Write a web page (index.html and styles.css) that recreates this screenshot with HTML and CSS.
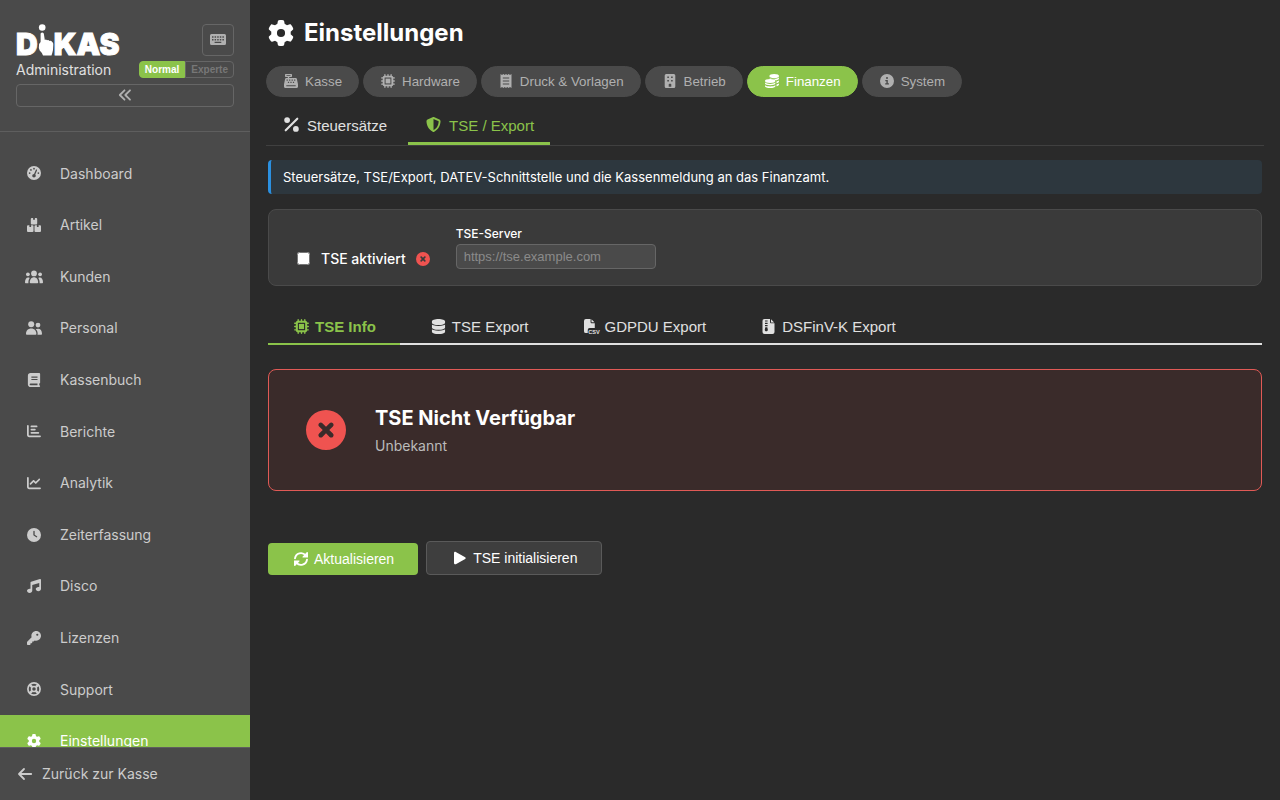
FILE: index.html
```html
<!DOCTYPE html>
<html lang="de">

<head>
    <meta charset="UTF-8">
    <meta name="viewport" content="width=device-width, initial-scale=1">
    <title>DiKAS Administration</title>
    <link rel="stylesheet" href="styles.css">
</head>

<body>
    <!-- Icons -->
    <svg class="sprite" aria-hidden="true">
        <symbol id="i-gear" viewBox="0 0 512 512"><path d="M495.9 166.6c3.2 8.7 .5 18.4-6.4 24.6l-43.3 39.4c1.1 8.3 1.7 16.8 1.7 25.4s-.6 17.1-1.7 25.4l43.3 39.4c6.9 6.2 9.6 15.9 6.4 24.6c-4.4 11.9-9.7 23.3-15.8 34.3l-4.7 8.1c-6.6 11-14 21.4-22.1 31.2c-5.9 7.2-15.7 9.6-24.5 6.8l-55.7-17.7c-13.4 10.3-28.2 18.9-44 25.4l-12.5 57.1c-2 9.1-9 16.3-18.2 17.8c-13.8 2.3-28 3.5-42.5 3.5s-28.7-1.2-42.5-3.5c-9.2-1.5-16.2-8.7-18.2-17.8l-12.5-57.1c-15.8-6.5-30.6-15.1-44-25.4L83.1 425.9c-8.8 2.8-18.6 .3-24.5-6.8c-8.1-9.8-15.5-20.2-22.1-31.2l-4.7-8.1c-6.1-11-11.4-22.4-15.8-34.3c-3.2-8.7-.5-18.4 6.4-24.6l43.3-39.4C64.6 273.1 64 264.6 64 256s.6-17.1 1.7-25.4L22.4 191.2c-6.9-6.2-9.6-15.9-6.4-24.6c4.4-11.9 9.7-23.3 15.8-34.3l4.7-8.1c6.6-11 14-21.4 22.1-31.2c5.9-7.2 15.7-9.6 24.5-6.8l55.7 17.7c13.4-10.3 28.2-18.9 44-25.4l12.5-57.1c2-9.1 9-16.3 18.2-17.8C227.3 1.2 241.5 0 256 0s28.7 1.2 42.5 3.5c9.2 1.5 16.2 8.7 18.2 17.8l12.5 57.1c15.8 6.5 30.6 15.1 44 25.4l55.7-17.7c8.8-2.8 18.6-.3 24.5 6.8c8.1 9.8 15.5 20.2 22.1 31.2l4.7 8.1c6.1 11 11.4 22.4 15.8 34.3zM256 336a80 80 0 1 0 0-160 80 80 0 1 0 0 160z"/></symbol>
        <symbol id="i-gauge" viewBox="0 0 512 512"><path d="M0 256a256 256 0 1 1 512 0A256 256 0 1 1 0 256zM288 96a32 32 0 1 0 -64 0 32 32 0 1 0 64 0zM256 416c35.3 0 64-28.7 64-64c0-17.4-6.9-33.1-18.1-44.6L366 161.7c5.3-12.1-.2-26.3-12.3-31.6s-26.3 .2-31.6 12.3L257.9 288c-.6 0-1.3 0-1.9 0c-35.3 0-64 28.7-64 64s28.7 64 64 64zM176 144a32 32 0 1 0 -64 0 32 32 0 1 0 64 0zM96 288a32 32 0 1 0 0-64 32 32 0 1 0 0 64zm352-32a32 32 0 1 0 -64 0 32 32 0 1 0 64 0z"/></symbol>
        <symbol id="i-boxes" viewBox="0 0 14 14"><path d="M4.800 0h1.300v1.800h1.800V0H9.200a1 1 0 0 1 1 1v4.500a1 1 0 0 1-1 1H4.800a1 1 0 0 1-1-1V1a1 1 0 0 1 1-1zM1 7.300h1.400v1.800h1.700V7.300h1.400a1 1 0 0 1 1 1V13a1 1 0 0 1-1 1H1a1 1 0 0 1-1-1V8.300a1 1 0 0 1 1-1zM8.500 7.300h1.400v1.800h1.700V7.300H13a1 1 0 0 1 1 1V13a1 1 0 0 1-1 1H8.500a1 1 0 0 1-1-1V8.300a1 1 0 0 1 1-1z"/></symbol>
        <symbol id="i-users" viewBox="0 0 18 14"><circle cx="9" cy="3.400" r="2.900"/><circle cx="2.900" cy="4.300" r="1.900"/><circle cx="15.100" cy="4.300" r="1.900"/><path d="M4.800 12.500C4.800 9.400 6.500 7.200 9 7.200s4.200 2.200 4.200 5.300c0 .5-.3.800-.8.800H5.600c-.5 0-.8-.3-.8-.8zM0 12.300c0-2.700 1.100-4.800 3.200-4.800.6 0 1.100.1 1.500.4-.9 1.200-1.400 3.200-1.300 5.400H1c-.6 0-1-.3-1-1zM18 12.300c0-2.700-1.100-4.800-3.200-4.800-.6 0-1.100.1-1.500.4.900 1.200 1.400 3.200 1.300 5.400H17c.6 0 1-.3 1-1z"/></symbol>
        <symbol id="i-team" viewBox="0 0 16 14"><circle cx="5.200" cy="3.300" r="3"/><circle cx="12" cy="4.100" r="2.400"/><path d="M0 13c0-3.200 2-5.400 5.200-5.400s5.200 2.200 5.200 5.400c0 .5-.3.800-.8.800H.8c-.5 0-.8-.3-.8-.8zM9.700 8.300c.6-.4 1.400-.6 2.300-.6 2.500 0 4 1.900 4 5.100 0 .6-.4 1-1 1h-3.500c.5-2.200-.2-4.200-1.800-5.500z"/></symbol>
        <symbol id="i-book" viewBox="0 0 448 512"><path d="M96 0C43 0 0 43 0 96V416c0 53 43 96 96 96H384h32c17.700 0 32-14.300 32-32s-14.300-32-32-32V384c17.700 0 32-14.300 32-32V32c0-17.700-14.300-32-32-32H384 96zm0 384H352v64H96c-17.700 0-32-14.300-32-32s14.300-32 32-32zm32-252h224v44H128zm0 84h224v44H128z"/></symbol>
        <symbol id="i-bars" viewBox="0 0 512 512"><path d="M32 32c17.700 0 32 14.300 32 32V400c0 8.800 7.200 16 16 16H480c17.700 0 32 14.300 32 32s-14.300 32-32 32H80c-44.200 0-80-35.800-80-80V64C0 46.300 14.300 32 32 32zM160 58H352a31 31 0 0 1 0 62H160a31 31 0 0 1 0-62zm0 116H288a31 31 0 0 1 0 62H160a31 31 0 0 1 0-62zm0 116H416a31 31 0 0 1 0 62H160a31 31 0 0 1 0-62z"/></symbol>
        <symbol id="i-chart" viewBox="0 0 512 512"><path d="M64 64c0-17.700-14.300-32-32-32S0 46.300 0 64V400c0 44.200 35.800 80 80 80H480c17.700 0 32-14.300 32-32s-14.300-32-32-32H80c-8.800 0-16-7.200-16-16V64zm406.600 86.600c12.500-12.500 12.500-32.800 0-45.300s-32.800-12.500-45.300 0L320 210.700l-57.400-57.400c-12.500-12.500-32.800-12.500-45.300 0l-112 112c-12.500 12.500-12.500 32.800 0 45.300s32.800 12.500 45.300 0L240 221.300l57.400 57.400c12.500 12.500 32.800 12.500 45.300 0l128-128z"/></symbol>
        <symbol id="i-clock" viewBox="0 0 512 512"><path d="M256 0a256 256 0 1 1 0 512A256 256 0 1 1 256 0zM232 120V256c0 8 4 15.500 10.700 20l96 64c11 7.400 25.900 4.400 33.300-6.700s4.400-25.900-6.700-33.300L280 243.200V120c0-13.300-10.700-24-24-24s-24 10.700-24 24z"/></symbol>
        <symbol id="i-music" viewBox="0 0 512 512"><path d="M499.100 6.300c8.100 6 12.900 15.600 12.900 25.700v72V368c0 44.200-43 80-96 80s-96-35.800-96-80s43-80 96-80c11.200 0 22 1.600 32 4.600V147L192 223.800V432c0 44.200-43 80-96 80s-96-35.800-96-80s43-80 96-80c11.200 0 22 1.600 32 4.600V200 128c0-14.100 9.300-26.600 22.800-30.700l320-96c9.700-2.900 20.200-1.100 28.300 5z"/></symbol>
        <symbol id="i-key" viewBox="0 0 512 512"><path d="M336 352c97.200 0 176-78.800 176-176S433.200 0 336 0S160 78.800 160 176c0 18.700 2.900 36.800 8.300 53.700L7 391c-4.500 4.500-7 10.600-7 17v80c0 13.300 10.700 24 24 24h80c13.300 0 24-10.700 24-24V448h40c13.300 0 24-10.700 24-24V384h40c6.400 0 12.500-2.500 17-7l33.300-33.300c16.900 5.400 35 8.300 53.700 8.300zM376 96a40 40 0 1 1 0 80 40 40 0 1 1 0-80z"/></symbol>
        <symbol id="i-ring" viewBox="0 0 14 14"><g fill="none" stroke="currentColor"><circle cx="7" cy="7" r="6.100" stroke-width="1.700"/><circle cx="7" cy="7" r="2.500" stroke-width="1.500"/><path stroke-width="2.400" d="M2.800 2.800l2.400 2.400M11.200 2.800L8.800 5.200M2.800 11.200l2.400-2.400M11.200 11.200L8.800 8.800"/></g></symbol>
        <symbol id="i-left" viewBox="0 0 14 14"><path d="M6 2L1 7l5 5M1.200 7H13.200" fill="none" stroke="currentColor" stroke-width="1.800" stroke-linecap="round" stroke-linejoin="round"/></symbol>
        <symbol id="i-collapse" viewBox="0 0 14 14"><path d="M6.500 2.300L1.800 7l4.700 4.700M12 2.300L7.300 7l4.700 4.700" fill="none" stroke="currentColor" stroke-width="1.800" stroke-linecap="round" stroke-linejoin="round"/></symbol>
        <symbol id="i-keyboard" viewBox="0 0 16 12"><path fill-rule="evenodd" d="M1.500 0h13A1.500 1.500 0 0 1 16 1.500v8a1.500 1.500 0 0 1-1.500 1.500h-13A1.500 1.500 0 0 1 0 9.500v-8A1.500 1.500 0 0 1 1.500 0zM2 2.200v1.500h1.500V2.200zm2.600 0v1.500h1.500V2.200zm2.600 0v1.500h1.500V2.200zm2.600 0v1.500h1.500V2.200zm2.600 0v1.500h1.500V2.200zM2 4.900v1.500h1.500V4.900zm2.600 0v1.500h1.500V4.900zm2.600 0v1.500h1.500V4.900zm2.600 0v1.500h1.500V4.900zm2.600 0v1.500h1.500V4.900zM4.600 7.700v1.400h6.700V7.700z"/></symbol>
        <symbol id="i-register" viewBox="0 0 14 14"><path fill-rule="evenodd" d="M1.700 0h5.600a.7.700 0 0 1 .7.700v1.600a.7.700 0 0 1-.7.700H5.200v1h6.400c.7 0 1.200.4 1.300 1.100L14 10.300v2.500c0 .7-.5 1.200-1.200 1.200H1.200C.5 14 0 13.500 0 12.800v-2.500l1.100-5.200C1.200 4.400 1.700 4 2.400 4h1.400V3H1.700a.7.700 0 0 1-.7-.7V.700A.7.700 0 0 1 1.700 0zm.8 1.100v.7h4v-.7zM2.600 5.600v1.100h1.200V5.600zm2.500 0v1.100h1.200V5.600zm2.500 0v1.100h1.200V5.600zm2.500 0v1.100h1.200V5.600zM3.900 7.800v1.100h1.200V7.800zm2.500 0v1.100h1.200V7.800zm2.500 0v1.100h1.200V7.800zM2.300 11.300v1h9.400v-1z"/></symbol>
        <symbol id="i-chip" viewBox="0 0 14 14"><path fill="none" stroke="currentColor" stroke-width="1.300" stroke-linecap="round" d="M3.900.7V2.500M7 .7V2.500M10.100.7V2.500M3.900 11.500v1.800M7 11.500v1.800M10.100 11.500v1.800M.7 3.900H2.500M.7 7H2.500M.7 10.100H2.500M11.500 3.900h1.800M11.500 7h1.800M11.500 10.100h1.800"/><path fill-rule="evenodd" d="M3.500 1.700h7a1.800 1.800 0 0 1 1.800 1.800v7a1.800 1.800 0 0 1-1.800 1.800h-7a1.800 1.800 0 0 1-1.800-1.800v-7a1.800 1.800 0 0 1 1.800-1.800zM3.600 3.600v6.800h6.800V3.600z"/><path d="M4.600 4.600h4.800v4.800H4.600z"/></symbol>
        <symbol id="i-receipt" viewBox="0 0 12 14"><path fill-rule="evenodd" d="M.5 0L2 1.100 3.400 0l1.300 1.100L6 0l1.300 1.100L8.600 0 10 1.100 11.500 0v14L10 12.900 8.600 14l-1.300-1.100L6 14l-1.300-1.100L3.400 14 2 12.900.5 14zM2.800 3.400v1.100h6.400V3.400zm0 3v1.100h6.400V6.400zm0 3v1.100h6.400V9.400z"/></symbol>
        <symbol id="i-building" viewBox="0 0 12 14"><path fill-rule="evenodd" d="M2.200 0h7.600A1.500 1.500 0 0 1 11.300 1.500v11A1.500 1.500 0 0 1 9.800 14H2.200A1.500 1.500 0 0 1 .7 12.500v-11A1.500 1.500 0 0 1 2.200 0zM3.300 2.500v1.600h1.600V2.500zm3.800 0v1.600h1.600V2.500zM3.300 6v1.600h1.600V6zm3.800 0v1.600h1.600V6zM4.700 12.700h2.600v-2.200a.7.700 0 0 0-.7-.7H5.400a.7.700 0 0 0-.7.700z"/></symbol>
        <symbol id="i-coins" viewBox="0 0 14 14"><ellipse cx="9.200" cy="2" rx="4.800" ry="2"/><path d="M14 3.500v1c0 .8-1.200 1.600-3 1.900-.9-1.300-3.300-2-6.300-2v-.6c1 .6 2.700 1 4.500 1 2 0 3.800-.5 4.800-1.300zM14 6.500v1c0 .8-1 1.500-2.500 1.800V7.500c1-.2 1.900-.6 2.500-1zM14 9.500v1c0 .8-1 1.500-2.500 1.800v-1.800c1-.2 1.900-.6 2.500-1z"/><ellipse cx="5.200" cy="7" rx="5.200" ry="1.900"/><path d="M0 8.500c1 .9 3 1.400 5.200 1.400s4.200-.5 5.200-1.400v1.100c0 1-2.300 1.700-5.200 1.700S0 10.600 0 9.600zM0 11.200c1 .8 3 1.200 5.200 1.200s4.200-.4 5.200-1.200v1c0 1-2.300 1.800-5.200 1.800S0 13.200 0 12.200z"/></symbol>
        <symbol id="i-info" viewBox="0 0 14 14"><path fill-rule="evenodd" d="M7 0a7 7 0 1 1 0 14A7 7 0 0 1 7 0zm0 3a1 1 0 1 0 0 2 1 1 0 0 0 0-2zM5.300 6v1.200h1.100v2.100H5.200v1.300h3.700V9.300h-1.100V6z"/></symbol>
        <symbol id="i-percent" viewBox="0 0 14 14"><circle cx="2.900" cy="2.900" r="2.700"/><circle cx="11.100" cy="11.100" r="2.700"/><path d="M1.600 12.400L12.400 1.600" stroke="currentColor" stroke-width="2" stroke-linecap="round"/></symbol>
        <symbol id="i-shield" viewBox="0 0 512 512"><path d="M256 0c4.600 0 9.200 1 13.400 2.900L457.700 82.800c22 9.300 38.400 31 38.300 57.200c-.5 99.200-41.300 280.700-213.600 363.200c-16.700 8-36.100 8-52.800 0C57.300 420.700 16.500 239.200 16 140c-.1-26.200 16.300-47.900 38.300-57.200L242.700 2.900C246.800 1 251.400 0 256 0zm0 66.800V444.800C394 378 431.100 230.100 432 141.400L256 66.800z"/></symbol>
        <symbol id="i-xmark" viewBox="0 0 512 512"><path d="M256 512A256 256 0 1 0 256 0a256 256 0 1 0 0 512zM168 168c12-12 30-12 42 0l46 46 46-46c12-12 30-12 42 0s12 30 0 42l-46 46 46 46c12 12 12 30 0 42s-30 12-42 0l-46-46-46 46c-12 12-30 12-42 0s-12-30 0-42l46-46-46-46c-12-12-12-30 0-42z"/></symbol>
        <symbol id="i-db" viewBox="0 0 448 512"><path d="M448 80v48c0 44.200-100.300 80-224 80S0 172.200 0 128V80C0 35.800 100.300 0 224 0S448 35.800 448 80zM393.200 214.700c20.800-7.400 39.900-16.900 54.800-28.600V288c0 44.200-100.300 80-224 80S0 332.200 0 288V186.100c14.900 11.800 34 21.200 54.800 28.600C99.700 230.700 159.500 240 224 240s124.300-9.300 169.200-25.300zM0 346.100c14.900 11.800 34 21.200 54.800 28.600C99.700 390.700 159.500 400 224 400s124.300-9.300 169.200-25.300c20.800-7.400 39.900-16.900 54.800-28.600V432c0 44.200-100.300 80-224 80S0 476.200 0 432V346.100z"/></symbol>
        <symbol id="i-csv" viewBox="0 0 18 16"><path d="M3 0h5v3.200c0 .8.500 1.300 1.300 1.300h3.200V9.500H7a2 2 0 0 0-2 2v3.500H3a2 2 0 0 1-2-2V2a2 2 0 0 1 2-2zM9 .3L12.200 3.500H9z"/><text class="csv-text" x="5.500" y="15.500">CSV</text></symbol>
        <symbol id="i-zip" viewBox="0 0 12 15"><path fill-rule="evenodd" d="M2 0h5.500v3c0 .8.500 1.300 1.300 1.300H12V13a2 2 0 0 1-2 2H2a2 2 0 0 1-2-2V2a2 2 0 0 1 2-2zM2.500 1.500v1.100h2.600V1.500zm0 2.300v1.100h2.600V3.800zm0 2.300v1.100h2.600V6.100zM2.800 8.200l-.5 2.200c-.2 1 .5 1.800 1.500 1.800s1.700-.8 1.500-1.800l-.5-2.200zM8.500.3L11.700 3.400H8.500z"/></symbol>
        <symbol id="i-rotate" viewBox="0 0 14 14"><path d="M1 6.300A6 6 0 0 1 11.600 3.400M13 7.700A6 6 0 0 1 2.400 10.600" fill="none" stroke="currentColor" stroke-width="1.900" stroke-linecap="round"/><path d="M13.200 0c.5 0 .8.300.8.800V5.600H9.200c-.8 0-1-.7-.5-1.200L12.700.3c.1-.2.300-.3.500-.3zM.8 14c-.5 0-.8-.3-.8-.8V8.400H4.800c.8 0 1 .7.500 1.200L1.300 13.700c-.1.200-.3.300-.5.300z"/></symbol>
        <symbol id="i-play" viewBox="0 0 12 14"><path d="M0 1.900C0 1 1 .4 1.800.9l9.400 5.300c.7.400.7 1.300 0 1.700l-9.400 5.300C1 13.600 0 13 0 12.100z"/></symbol>
    </svg>

    <aside class="sidebar">
        <div class="sidebar-header">
            <div class="row">
                <div class="logo">
                    <span>D</span>
                    <svg class="logo-hand" viewBox="0 0 16 32" role="img" aria-label="i"><circle cx="4.200" cy="3.500" r="3.300"/><path d="M2.600 9.500Q4.200 7.500 5.800 9.500L6.800 16Q8 15 9 16.300 10.500 15.600 11.600 17 13 16.400 14.200 18 15.500 18.500 15.300 20.500L15 26Q14.500 28.500 13.500 31.500H5Q4 28.500 1.700 26.500 .3 24 1.100 20L2.600 18Z"/></svg>
                    <span>KAS</span>
                </div>
                <button type="button" class="keyboard-btn" aria-label="Tastatur"><svg class="icon icon-kb"><use href="#i-keyboard"/></svg></button>
            </div>
            <div class="row">
                <span class="subtitle">Administration</span>
                <div class="mode">
                    <button type="button" class="active">Normal</button><button type="button">Experte</button>
                </div>
            </div>
            <button type="button" class="collapse-btn" aria-label="Einklappen"><svg class="icon"><use href="#i-collapse"/></svg></button>
        </div>
        <nav class="menu">
            <a href="#"><svg class="icon"><use href="#i-gauge"/></svg>Dashboard</a>
            <a href="#"><svg class="icon"><use href="#i-boxes"/></svg>Artikel</a>
            <a href="#"><svg class="icon"><use href="#i-users"/></svg>Kunden</a>
            <a href="#"><svg class="icon"><use href="#i-team"/></svg>Personal</a>
            <a href="#"><svg class="icon"><use href="#i-book"/></svg>Kassenbuch</a>
            <a href="#"><svg class="icon"><use href="#i-bars"/></svg>Berichte</a>
            <a href="#"><svg class="icon"><use href="#i-chart"/></svg>Analytik</a>
            <a href="#"><svg class="icon"><use href="#i-clock"/></svg>Zeiterfassung</a>
            <a href="#"><svg class="icon"><use href="#i-music"/></svg>Disco</a>
            <a href="#"><svg class="icon"><use href="#i-key"/></svg>Lizenzen</a>
            <a href="#"><svg class="icon"><use href="#i-ring"/></svg>Support</a>
            <a href="#" class="active"><svg class="icon"><use href="#i-gear"/></svg>Einstellungen</a>
        </nav>
        <a href="#" class="back"><svg class="icon"><use href="#i-left"/></svg>Zurück zur Kasse</a>
    </aside>

    <main class="main">
        <h1><svg class="icon"><use href="#i-gear"/></svg>Einstellungen</h1>

        <div class="pills">
            <button type="button"><svg class="icon"><use href="#i-register"/></svg>Kasse</button>
            <button type="button"><svg class="icon"><use href="#i-chip"/></svg>Hardware</button>
            <button type="button"><svg class="icon"><use href="#i-receipt"/></svg>Druck &amp; Vorlagen</button>
            <button type="button"><svg class="icon"><use href="#i-building"/></svg>Betrieb</button>
            <button type="button" class="active"><svg class="icon"><use href="#i-coins"/></svg>Finanzen</button>
            <button type="button"><svg class="icon"><use href="#i-info"/></svg>System</button>
        </div>

        <div class="subtabs">
            <button type="button"><svg class="icon"><use href="#i-percent"/></svg>Steuersätze</button>
            <button type="button" class="active"><svg class="icon"><use href="#i-shield"/></svg>TSE / Export</button>
        </div>

        <div class="content">
            <div class="hint">Steuersätze, TSE/Export, DATEV-Schnittstelle und die Kassenmeldung an das Finanzamt.</div>

            <div class="card">
                <div class="check">
                    <input type="checkbox" id="tseActive">
                    <label for="tseActive">TSE aktiviert</label>
                    <svg class="icon error"><use href="#i-xmark"/></svg>
                </div>
                <div class="field">
                    <label for="tseServer">TSE-Server</label>
                    <input type="text" id="tseServer" placeholder="https://tse.example.com">
                </div>
            </div>

            <div class="tabs">
                <button type="button" class="active"><svg class="icon"><use href="#i-chip"/></svg>TSE Info</button>
                <button type="button"><svg class="icon"><use href="#i-db"/></svg>TSE Export</button>
                <button type="button"><svg class="icon"><use href="#i-csv"/></svg>GDPDU Export</button>
                <button type="button"><svg class="icon"><use href="#i-zip"/></svg>DSFinV-K Export</button>
            </div>

            <div class="status">
                <svg class="icon error"><use href="#i-xmark"/></svg>
                <div>
                    <h2>TSE Nicht Verfügbar</h2>
                    <p>Unbekannt</p>
                </div>
            </div>

            <div class="actions">
                <button type="button" class="btn btn-primary"><svg class="icon"><use href="#i-rotate"/></svg>Aktualisieren</button>
                <button type="button" class="btn btn-secondary"><svg class="icon"><use href="#i-play"/></svg>TSE initialisieren</button>
            </div>
        </div>
    </main>
</body>

</html>
```
FILE: styles.css
```css
* {
    box-sizing: border-box;
}

body,
h1,
h2,
p {
    margin: 0;
}

body {
    display: flex;
    height: 100vh;
    background-color: #2a2a2a;
    color: #fff;
    font-family: Inter, "Liberation Sans", sans-serif;
    font-size: 14px;
    line-height: 1.4;
}

a {
    color: inherit;
    text-decoration: none;
}

button,
.field input {
    font-family: "Liberation Sans", Arial, sans-serif;
}

button {
    color: inherit;
    cursor: pointer;
}

.sprite {
    display: none;
}

.icon {
    width: 18px;
    height: 14px;
    flex: none;
    fill: currentColor;
}

.csv-text {
    font: bold 6px "Liberation Sans", Arial, sans-serif;
}

.error {
    color: #ef5350;
}

/* Sidebar */
.sidebar {
    display: flex;
    flex-direction: column;
    flex: none;
    width: 250px;
    background-color: #4a4a4a;
    color: #ccc;
}

.sidebar-header {
    display: flex;
    flex-direction: column;
    gap: 4px;
    padding: 24px 16px;
    border-bottom: 1px solid #5e5e5e;
}

.row {
    display: flex;
    align-items: center;
    justify-content: space-between;
}

.logo {
    display: flex;
    align-items: flex-end;
    color: #fff;
    font-size: 30px;
    font-weight: 900;
    line-height: 23px;
    -webkit-text-stroke: 1px #fff;
}

.logo-hand {
    width: 16px;
    height: 32px;
    fill: #fff;
}

.subtitle {
    color: #e0e0e0;
}

.keyboard-btn,
.collapse-btn {
    display: flex;
    align-items: center;
    justify-content: center;
    padding: 0;
    background: none;
    border: 1px solid #666;
    border-radius: 4px;
    color: #b0b0b0;
}

.keyboard-btn {
    width: 32px;
    height: 32px;
}

.icon-kb {
    width: 16px;
    height: 12px;
}

.collapse-btn {
    height: 23px;
}

.mode {
    display: flex;
}

.mode button {
    height: 17px;
    padding: 0 5px;
    background: none;
    border: 1px solid #666;
    border-radius: 0 4px 4px 0;
    color: #777;
    font-size: 10px;
    font-weight: bold;
    line-height: 15px;
}

.mode .active {
    background-color: #8bc34a;
    border-color: #8bc34a;
    border-radius: 4px 0 0 4px;
    color: #fff;
}

.menu {
    flex: 1;
    min-height: 0;
    padding: 16px 0;
    overflow-y: auto;
    scrollbar-width: none;
}

.menu a {
    display: flex;
    align-items: center;
    gap: 16px;
    padding: 16px 24px;
}

.menu .icon {
    width: 20px;
}

.menu .active {
    background-color: #8bc34a;
    color: #fff;
}

.back {
    display: flex;
    align-items: center;
    gap: 8px;
    padding: 16px;
    border-top: 1px solid #5e5e5e;
}

/* Inhalt */
.main {
    flex: 1;
    min-width: 0;
    padding: 16px;
    overflow-y: auto;
}

h1 {
    display: flex;
    align-items: center;
    gap: 10px;
    margin: 0 2px 16px;
    font-size: 24px;
}

h1 .icon {
    width: 26px;
    height: 26px;
}

.pills {
    display: flex;
    flex-wrap: wrap;
    gap: 4px;
    margin-bottom: 12px;
}

.pills button {
    display: flex;
    align-items: flex-start;
    gap: 6px;
    padding: 7px 16px;
    background-color: #4a4a4a;
    border: 1px solid #4a4a4a;
    border-radius: 16px;
    color: #b0b0b0;
}

.pills .icon {
    width: 16px;
}

.pills .active {
    background-color: #8bc34a;
    border-color: #8bc34a;
    color: #fff;
}

.subtabs {
    display: flex;
    gap: 5px;
    border-bottom: 1px solid #404040;
}

.subtabs button {
    display: flex;
    align-items: flex-start;
    gap: 6px;
    padding: 8px 16px;
    background: none;
    border: none;
    border-bottom: 3px solid transparent;
    color: #e0e0e0;
    font-size: 15px;
}

.subtabs .icon,
.tabs .icon {
    width: 19px;
    height: 15px;
}

.subtabs .active {
    border-bottom-color: #8bc34a;
    color: #8bc34a;
}

.content {
    margin: 14px 2px 0;
}

.hint {
    margin-bottom: 15px;
    padding: 8px 12px;
    background-color: #2d373e;
    border-left: 3px solid #2b90e0;
    border-radius: 4px;
    font-size: 13px;
}

.card {
    display: flex;
    align-items: flex-end;
    gap: 24px;
    margin-bottom: 24px;
    padding: 16px 24px;
    background-color: #3a3a3a;
    border: 1px solid #4a4a4a;
    border-radius: 8px;
}

.check {
    display: flex;
    align-items: center;
    gap: 8px;
    font-weight: 500;
}

.field {
    display: flex;
    flex-direction: column;
    gap: 1px;
}

.field label {
    font-size: 12px;
    font-weight: 500;
}

.field input {
    width: 200px;
    height: 25px;
    padding: 0 7px;
    background-color: #4a4a4a;
    border: 1px solid #666;
    border-radius: 4px;
    color: #fff;
    font-size: 13px;
}

.field input::placeholder {
    color: #8a8a8a;
}

.tabs {
    display: flex;
    gap: 5px;
    margin-bottom: 24px;
    border-bottom: 2px solid #e0e0e0;
}

.tabs button {
    display: flex;
    align-items: center;
    gap: 4px;
    margin-bottom: -2px;
    padding: 8px 24px;
    background: none;
    border: none;
    border-bottom: 2px solid transparent;
    color: #e0e0e0;
    font-size: 15px;
}

.tabs .active {
    border-bottom-color: #8bc34a;
    color: #8bc34a;
    font-weight: bold;
}

.status {
    display: flex;
    align-items: center;
    gap: 24px;
    margin-bottom: 50px;
    padding: 32px;
    background-color: #3a2b2a;
    border: 1px solid #e05a56;
    border-radius: 8px;
}

.status .icon {
    width: 50px;
    height: 40px;
    margin: 8px 0;
}

.status h2 {
    margin-bottom: 4px;
    font-size: 20px;
}

.status p {
    color: #bbb;
}

.actions {
    display: flex;
    align-items: flex-end;
    gap: 8px;
}

.btn {
    display: flex;
    align-items: center;
    gap: 4px;
    padding: 8px 24px;
    border: none;
    border-radius: 4px;
    font-size: 14px;
}

.btn-primary {
    background-color: #8bc34a;
}

.btn-secondary {
    background-color: #3e3e3e;
    border: 1px solid #5a5a5a;
}
```
